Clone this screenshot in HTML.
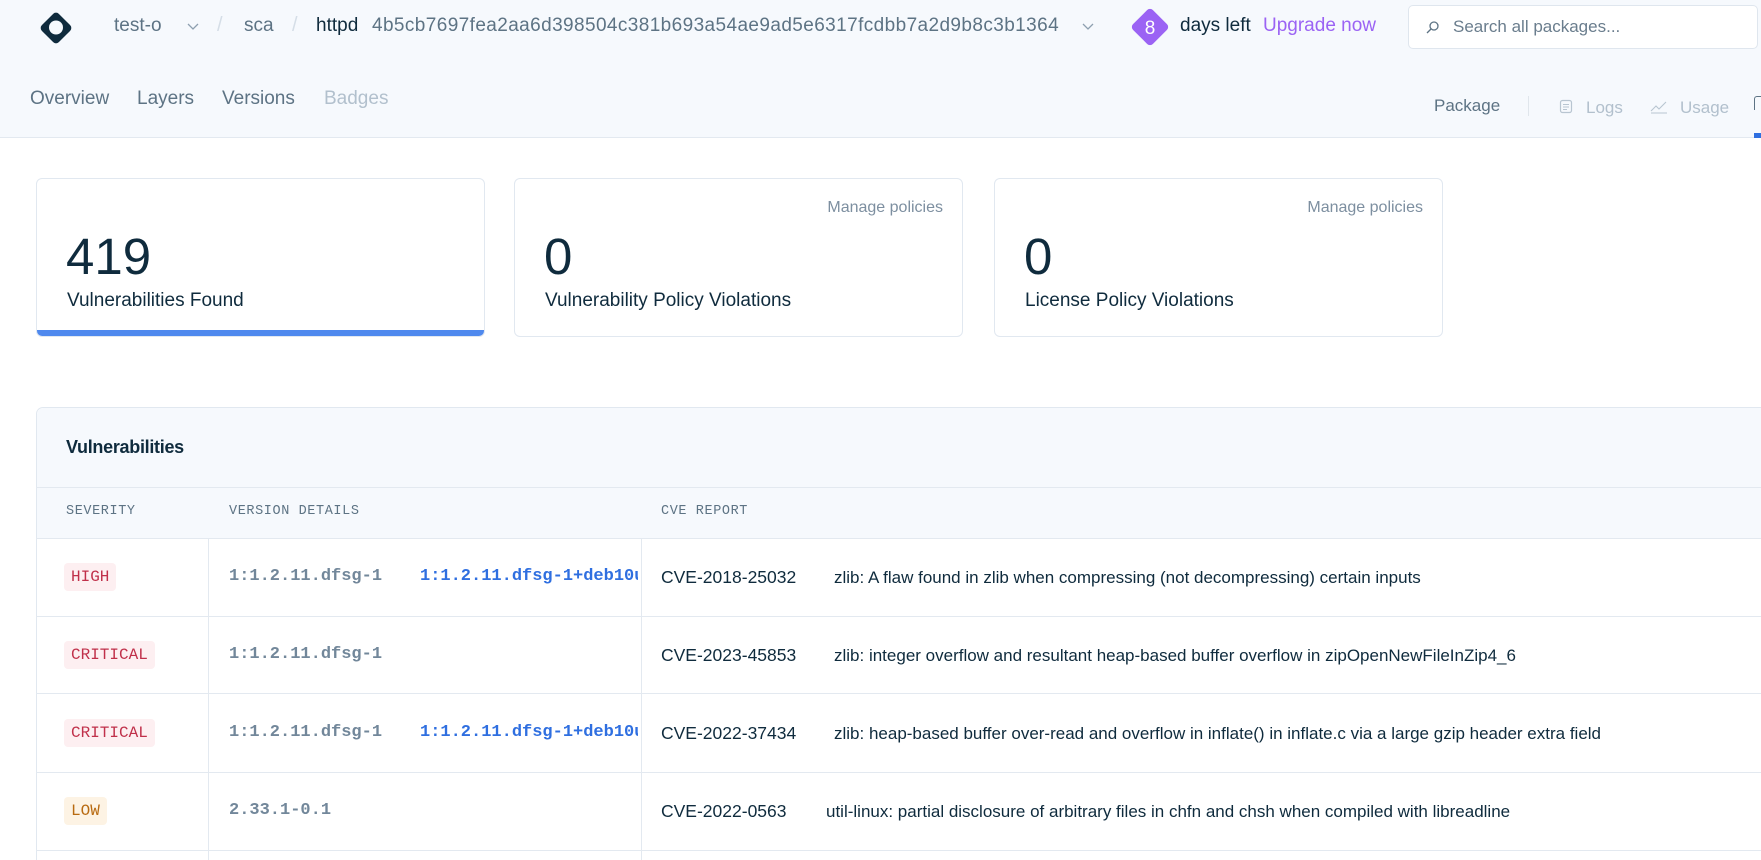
<!DOCTYPE html>
<html><head><meta charset="utf-8">
<style>
*{margin:0;padding:0;box-sizing:border-box}
html,body{width:1761px;height:860px;overflow:hidden;background:#fff}
body{font-family:"Liberation Sans",sans-serif;color:#0f2b3d}
#w{position:relative;width:1761px;height:860px;overflow:hidden}
div{white-space:nowrap}
.a{position:absolute;white-space:nowrap}
.hdr{position:absolute;left:0;top:0;width:1761px;height:138px;background:#f6f9fd;border-bottom:1px solid #e3e9f0}
.card{position:absolute;top:178px;height:159px;background:#fff;border:1px solid #e1e8f0;border-radius:6px;overflow:hidden}
.num{position:absolute;left:29px;top:48px;font-size:51px;color:#0f2b3d}
.lbl{position:absolute;left:30px;top:111px;font-size:19px;color:#0f2b3d}
.mp{position:absolute;right:19px;top:20px;font-size:16px;color:#7d8fa0}
.mono{font-family:"Liberation Mono",monospace}
.badge{position:absolute;left:64px;height:28px;line-height:28px;padding:0 7px;border-radius:4px;font-family:"Liberation Mono",monospace;font-size:16px}
.hi{background:#fdeff1;color:#c0304a}
.lo{background:#fdf3e4;color:#b86a10}
.ver{position:absolute;left:229px;font-family:"Liberation Mono",monospace;font-size:17px;color:#72879a;font-weight:bold}
.fix{position:absolute;left:420px;width:218px;overflow:hidden;font-family:"Liberation Mono",monospace;font-size:17px;color:#2f6fe0;font-weight:bold}
.cve{position:absolute;left:661px;font-size:17.5px;color:#0f2b3d}
.desc{position:absolute;font-size:17px;color:#0f2b3d}
.hl{position:absolute;left:36px;width:1725px;height:1px;background:#e3e9f0}
</style></head><body><div id="w">
<div class="hdr"></div>
<svg class="a" style="left:36px;top:8px" width="40" height="40" viewBox="0 0 40 40"><rect x="8" y="8" width="24" height="24" rx="4" transform="rotate(45 20 20)" fill="#0f2b3d"/><circle cx="20" cy="19.5" r="7" fill="#f6f9fd"/></svg>
<div class="a" style="left:114px;top:15px;font-size:19px;color:#5d7384">test-o</div>
<svg class="a" style="left:187px;top:23px" width="12" height="8"><path d="M1 1l5 5 5-5" fill="none" stroke="#8ea0b0" stroke-width="1.3"/></svg>
<div class="a" style="left:217px;top:14px;font-size:20px;color:#d5dee7">/</div>
<div class="a" style="left:244px;top:15px;font-size:19px;color:#5d7384">sca</div>
<div class="a" style="left:292px;top:14px;font-size:20px;color:#d5dee7">/</div>
<div class="a" style="left:316px;top:15px;font-size:19px;color:#0f2b3d">httpd</div>
<div class="a" style="left:372px;top:15px;font-size:19px;color:#5d7384;letter-spacing:0.4px">4b5cb7697fea2aa6d398504c381b693a54ae9ad5e6317fcdbb7a2d9b8c3b1364</div>
<svg class="a" style="left:1082px;top:23px" width="12" height="8"><path d="M1 1l5 5 5-5" fill="none" stroke="#8ea0b0" stroke-width="1.3"/></svg>
<svg class="a" style="left:1129px;top:6px" width="42" height="42" viewBox="0 0 42 42"><rect x="7" y="7" width="28" height="28" rx="4" transform="rotate(45 21 21)" fill="#9b63f4"/><text x="21" y="28" text-anchor="middle" font-family="Liberation Sans" font-size="19" fill="#fff">8</text></svg>
<div class="a" style="left:1180px;top:15px;font-size:19px;color:#0f2b3d">days left</div>
<div class="a" style="left:1263px;top:15px;font-size:19px;color:#9b63f4">Upgrade now</div>
<div class="a" style="left:1408px;top:5px;width:350px;height:44px;background:#fff;border:1px solid #dfe6ee;border-radius:5px"></div>
<svg class="a" style="left:1426px;top:20px" width="14" height="14"><circle cx="8" cy="6" r="4" fill="none" stroke="#5d7384" stroke-width="1.3"/><path d="M5 9l-4 4" stroke="#5d7384" stroke-width="1.3"/></svg>
<div class="a" style="left:1453px;top:17px;font-size:17px;color:#6a7d8d">Search all packages...</div>
<div class="a" style="left:30px;top:88px;font-size:19px;color:#5d7384">Overview</div>
<div class="a" style="left:137px;top:88px;font-size:19px;color:#5d7384">Layers</div>
<div class="a" style="left:222px;top:88px;font-size:19px;color:#5d7384">Versions</div>
<div class="a" style="left:324px;top:88px;font-size:19px;color:#b2c0cd">Badges</div>
<div class="a" style="left:1434px;top:96px;font-size:17px;color:#5d7384">Package</div>
<div class="a" style="left:1528px;top:96px;width:1px;height:20px;background:#e0e6ec"></div>
<svg class="a" style="left:1559px;top:99px" width="14" height="16"><rect x="1.5" y="1.5" width="11" height="12" rx="2" fill="none" stroke="#b8c5d1" stroke-width="1.2"/><path d="M4 5.5h6M4 8h6M4 10.5h4" stroke="#b8c5d1" stroke-width="1.1"/></svg>
<div class="a" style="left:1586px;top:98px;font-size:17px;color:#b2c0cd">Logs</div>
<svg class="a" style="left:1650px;top:100px" width="18" height="14"><path d="M1 11l5-5 3 3 7-7M1 13h16" fill="none" stroke="#b8c5d1" stroke-width="1.1"/></svg>
<div class="a" style="left:1680px;top:98px;font-size:17px;color:#b2c0cd">Usage</div>
<div class="a" style="left:1754px;top:96px;width:7px;height:14px;border:1.3px solid #5d7384;border-bottom:none;border-right:none;border-radius:3px 0 0 0"></div>
<div class="a" style="left:1754px;top:133px;width:7px;height:5px;background:#2f6fe0"></div>

<div class="card" style="left:36px;width:449px"><div class="num">419</div><div class="lbl">Vulnerabilities Found</div><div style="position:absolute;left:0;bottom:0;width:100%;height:6px;background:#4f89ee"></div></div>
<div class="card" style="left:514px;width:449px"><div class="mp">Manage policies</div><div class="num">0</div><div class="lbl">Vulnerability Policy Violations</div></div>
<div class="card" style="left:994px;width:449px"><div class="mp">Manage policies</div><div class="num">0</div><div class="lbl">License Policy Violations</div></div>

<div class="a" style="left:36px;top:407px;width:1725px;height:453px;border:1px solid #e1e8f0;border-right:none;border-bottom:none;border-radius:7px 0 0 0;background:#fff"></div>
<div class="a" style="left:37px;top:408px;width:1724px;height:130px;background:#f6f9fd;border-radius:7px 0 0 0"></div>
<div class="a" style="left:66px;top:437px;font-size:18px;font-weight:bold;color:#0f2b3d;letter-spacing:-0.3px">Vulnerabilities</div>
<div class="hl" style="top:487px"></div>
<div class="a mono" style="left:66px;top:504px;font-size:13.5px;color:#5d7384;letter-spacing:0.6px">SEVERITY</div>
<div class="a mono" style="left:229px;top:504px;font-size:13.5px;color:#5d7384;letter-spacing:0.6px">VERSION DETAILS</div>
<div class="a mono" style="left:661px;top:504px;font-size:13.5px;color:#5d7384;letter-spacing:0.6px">CVE REPORT</div>
<div class="hl" style="top:538px"></div>
<div class="hl" style="top:616px"></div>
<div class="hl" style="top:693px"></div>
<div class="hl" style="top:772px"></div>
<div class="hl" style="top:850px"></div>
<div class="a" style="left:208px;top:538px;width:1px;height:322px;background:#e3e9f0"></div>
<div class="a" style="left:641px;top:538px;width:1px;height:322px;background:#e3e9f0"></div>

<div class="badge hi" style="top:563px">HIGH</div>
<div class="ver" style="top:567px">1:1.2.11.dfsg-1</div>
<div class="fix" style="top:567px">1:1.2.11.dfsg-1+deb10u1</div>
<div class="cve" style="top:567px">CVE-2018-25032</div>
<div class="desc" style="left:834px;top:568px">zlib: A flaw found in zlib when compressing (not decompressing) certain inputs</div>

<div class="badge hi" style="top:641px">CRITICAL</div>
<div class="ver" style="top:645px">1:1.2.11.dfsg-1</div>
<div class="cve" style="top:645px">CVE-2023-45853</div>
<div class="desc" style="left:834px;top:646px">zlib: integer overflow and resultant heap-based buffer overflow in zipOpenNewFileInZip4_6</div>

<div class="badge hi" style="top:719px">CRITICAL</div>
<div class="ver" style="top:723px">1:1.2.11.dfsg-1</div>
<div class="fix" style="top:723px">1:1.2.11.dfsg-1+deb10u2</div>
<div class="cve" style="top:723px">CVE-2022-37434</div>
<div class="desc" style="left:834px;top:724px">zlib: heap-based buffer over-read and overflow in inflate() in inflate.c via a large gzip header extra field</div>

<div class="badge lo" style="top:797px">LOW</div>
<div class="ver" style="top:801px">2.33.1-0.1</div>
<div class="cve" style="top:801px">CVE-2022-0563</div>
<div class="desc" style="left:826px;top:802px">util-linux: partial disclosure of arbitrary files in chfn and chsh when compiled with libreadline</div>
</div></body></html>
